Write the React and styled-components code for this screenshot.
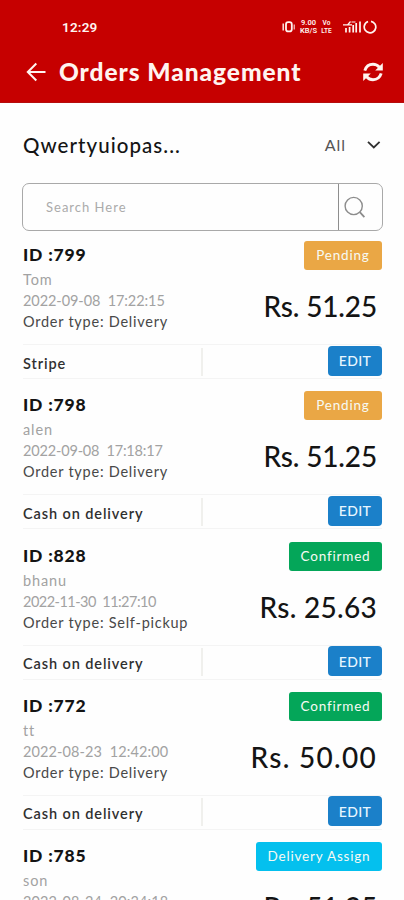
import React from "react";
import styled, { createGlobalStyle } from "styled-components";

const GlobalStyle = createGlobalStyle`
  * { box-sizing: border-box; }
  body { margin: 0; background: #fefefe; font-family: Lato, "Open Sans", sans-serif; }
  svg { flex: none; }
`;

const Screen = styled.div`
  width: 404px;
  height: 900px;
  overflow: hidden;
  background: #fefefe;
  color: #141414;
`;

const Header = styled.header`
  height: 103px;
  background: #c60000;
  color: #fff4f0;
  border-bottom: 1px solid #b50d0d;
`;

const StatusBar = styled.div`
  height: 52px;
  padding: 1px 27px 0 62px;
  display: flex;
  align-items: center;
  justify-content: space-between;
`;

const Clock = styled.span`
  font: 600 13.5px/18px Roboto, sans-serif;
  letter-spacing: 0.2px;
`;

const StatusIcons = styled.div`
  display: flex;
  align-items: center;
  height: 16px;
`;

const TinyStack = styled.span`
  width: ${(p) => p.$width}px;
  margin: 0 ${(p) => p.$after}px 0 4px;
  display: flex;
  flex-direction: column;
  align-items: center;
  font: 600 ${(p) => p.$size}px/8px Roboto, sans-serif;
`;

const TitleBar = styled.div`
  height: 40px;
  padding: 0 21px 0 26px;
  display: flex;
  align-items: center;
`;

const Title = styled.h1`
  flex: 1;
  margin: 0 0 0 13px;
  font: 900 24.5px/30px Lato, sans-serif;
  letter-spacing: 0.95px;
  white-space: nowrap;
`;

const FilterRow = styled.div`
  height: 80px;
  padding: 3px 22px 0 23px;
  display: flex;
  align-items: center;
`;

const Restaurant = styled.div`
  flex: 1;
  font-size: 20.5px;
  line-height: 26px;
  font-weight: 500;
  letter-spacing: 1.05px;
`;

const FilterValue = styled.span`
  font-size: 16px;
  line-height: 20px;
  color: #555;
  letter-spacing: 1px;
  margin-right: 20px;
`;

const SearchBox = styled.div`
  margin: 0 21px 0 22px;
  height: 48px;
  border: 1px solid #a9a9a9;
  border-radius: 7px;
  display: flex;
`;

const SearchText = styled.div`
  flex: 1;
  padding-left: 23px;
  font-size: 13px;
  line-height: 47px;
  letter-spacing: 1px;
  color: #ababab;
`;

const SearchButton = styled.div`
  width: 44px;
  border-left: 1px solid #8e8e8e;
  padding: 12px 0 0 5px;
`;

const OrderList = styled.main`
  padding: 10px 22px 0 23px;
`;

const Order = styled.article`
  height: 150.25px;
`;

const Summary = styled.div`
  height: 103px;
  display: flex;
  justify-content: space-between;
`;

const Details = styled.div`
  display: flex;
  flex-direction: column;
  white-space: pre;
`;

const OrderId = styled.div`
  height: 28px;
  font: 900 17.5px/27px Lato, sans-serif;
  letter-spacing: 0.8px;
`;

const DetailLine = styled.div`
  height: 21px;
  font-size: 14.5px;
  line-height: 21px;
  letter-spacing: ${(p) => p.$track}px;
  color: ${(p) => (p.$strong ? "#484848" : "#a2a2a2")};
`;

const Outcome = styled.div`
  display: flex;
  flex-direction: column;
  align-items: flex-end;
`;

const badgeColors = { Pending: "#eaa745", Confirmed: "#04a659", "Delivery Assign": "#04c0ee" };
const badgeWidths = { Pending: 78, Confirmed: 93, "Delivery Assign": 126 };

const Badge = styled.div`
  width: ${(p) => badgeWidths[p.$status]}px;
  height: 29px;
  border-radius: 3px;
  background: ${(p) => badgeColors[p.$status]};
  color: #f7faf4;
  font-size: 13.5px;
  line-height: 29px;
  letter-spacing: 0.8px;
  text-align: center;
  white-space: nowrap;
`;

const Price = styled.div`
  margin: 18px 5px 0 0;
  font-size: 28px;
  line-height: 36px;
  font-weight: 500;
  letter-spacing: ${(p) => p.$track}px;
  white-space: nowrap;
`;

const Footer = styled.div`
  height: 35px;
  border-top: 1px solid #f4f4f4;
  border-bottom: 1px solid #f4f4f4;
  display: flex;
  align-items: center;
`;

const Payment = styled.div`
  width: 180px;
  height: 28px;
  border-right: 2px solid #f0f0ed;
  font-size: 14.5px;
  line-height: 31px;
  font-weight: 600;
  color: #303030;
  letter-spacing: 0.9px;
`;

const EditButton = styled.button`
  margin: -2px 0 0 auto;
  width: 54px;
  height: 30px;
  padding: 0;
  border: 0;
  border-radius: 4px;
  background: #1b80c9;
  color: #e8f6ff;
  font: 500 14px/29px Lato, sans-serif;
  letter-spacing: 0.4px;
`;

const orders = [
  { id: "799", name: "Tom", date: "2022-09-08  17:22:15", dateTrack: -0.07, type: "Delivery", price: "51.25", priceTrack: -0.15, status: "Pending", payment: "Stripe" },
  { id: "798", name: "alen", date: "2022-09-08  17:18:17", dateTrack: -0.17, type: "Delivery", price: "51.25", priceTrack: -0.15, status: "Pending", payment: "Cash on delivery" },
  { id: "828", name: "bhanu", date: "2022-11-30  11:27:10", dateTrack: -0.52, type: "Self-pickup", price: "25.63", priceTrack: 0.3, status: "Confirmed", payment: "Cash on delivery" },
  { id: "772", name: "tt", date: "2022-08-23  12:42:00", dateTrack: 0.1, type: "Delivery", price: "50.00", priceTrack: 1.3, status: "Confirmed", payment: "Cash on delivery" },
  { id: "785", name: "son", date: "2022-08-24  20:34:18", dateTrack: 0.1, type: "Delivery", price: "51.25", priceTrack: -0.15, status: "Delivery Assign", payment: "Cash on delivery" },
];

function VibrateIcon() {
  return (
    <svg width="13" height="14" viewBox="0 0 13 14" fill="none" stroke="currentColor">
      <path d="M1.2 3.5v7" strokeWidth="1.4" />
      <rect x="4" y="2.2" width="5.8" height="9.2" rx="2.2" strokeWidth="1.8" />
      <path d="M12.2 4.5v5" strokeWidth="1" />
    </svg>
  );
}

function SignalIcon() {
  return (
    <svg width="20" height="14" viewBox="0 0 20 14" fill="none" stroke="currentColor">
      <path d="M4 12.5V8M7.6 12.5V7M11.2 12.5V5M14.2 12.5V3M18 12.5V1.5" strokeWidth="1.7" />
      <path d="M1 4.8h9M5.5 5l3-3.5M9.5 2h4" strokeWidth="1.2" />
    </svg>
  );
}

function RingIcon() {
  return (
    <svg width="15" height="14" viewBox="0 0 15 14" fill="none" stroke="currentColor">
      <circle cx="8" cy="7" r="5.8" strokeWidth="1.7" strokeDasharray="32.5 3.9" transform="rotate(-80 8 7)" />
    </svg>
  );
}

function BackIcon() {
  return (
    <svg width="20" height="20" viewBox="0 0 20 20" fill="none" stroke="currentColor" strokeWidth="2">
      <path d="M19.5 10H2M10.3 1.5L1.8 10l8.5 8.5" />
    </svg>
  );
}

function RefreshIcon() {
  return (
    <svg width="20" height="20" viewBox="0 0 20 20" fill="none" stroke="currentColor" strokeWidth="2.9">
      <path d="M1.8 8.6C3 4.8 6.2 2.3 10 2.3c2.6 0 4.7 1 6.4 3M18.2 11.4c-1.2 3.8-4.4 6.3-8.2 6.3-2.6 0-4.7-1-6.4-3" />
      <path d="M19.8 1v7.6h-7.6zM.2 19v-7.6h7.6z" fill="currentColor" stroke="none" />
    </svg>
  );
}

function ChevronIcon() {
  return (
    <svg width="16" height="12" viewBox="0 0 16 12" fill="none" stroke="#303030" strokeWidth="1.8">
      <path d="M2 2.8l5.8 5.7 5.8-5.7" />
    </svg>
  );
}

function SearchIcon() {
  return (
    <svg width="23" height="23" viewBox="0 0 23 23" fill="none" stroke="#8c8c8c" strokeWidth="1.4">
      <circle cx="9.7" cy="10" r="8.6" />
      <path d="M15.8 16.2l4.6 4.9" strokeWidth="1.8" />
    </svg>
  );
}

export default function App() {
  return (
    <Screen>
      <GlobalStyle />
      <Header>
        <StatusBar>
          <Clock>12:29</Clock>
          <StatusIcons>
            <VibrateIcon />
            <TinyStack $width={19} $after={0} $size={7.5}><span>9.00</span><span>KB/S</span></TinyStack>
            <TinyStack $width={9} $after={11} $size={6.5}><span>Vo</span><span>LTE</span></TinyStack>
            <SignalIcon />
            <RingIcon />
          </StatusIcons>
        </StatusBar>
        <TitleBar>
          <BackIcon />
          <Title>Orders Management</Title>
          <RefreshIcon />
        </TitleBar>
      </Header>
      <FilterRow>
        <Restaurant>Qwertyuiopas...</Restaurant>
        <FilterValue>All</FilterValue>
        <ChevronIcon />
      </FilterRow>
      <SearchBox>
        <SearchText>Search Here</SearchText>
        <SearchButton><SearchIcon /></SearchButton>
      </SearchBox>
      <OrderList>
        {orders.map((o) => (
          <Order key={o.id}>
            <Summary>
              <Details>
                <OrderId>ID :{o.id}</OrderId>
                <DetailLine $track={0.9}>{o.name}</DetailLine>
                <DetailLine $track={o.dateTrack}>{o.date}</DetailLine>
                <DetailLine $strong $track={0.75}>Order type: {o.type}</DetailLine>
              </Details>
              <Outcome>
                <Badge $status={o.status}>{o.status}</Badge>
                <Price $track={o.priceTrack}>Rs. {o.price}</Price>
              </Outcome>
            </Summary>
            <Footer>
              <Payment>{o.payment}</Payment>
              <EditButton>EDIT</EditButton>
            </Footer>
          </Order>
        ))}
      </OrderList>
    </Screen>
  );
}
